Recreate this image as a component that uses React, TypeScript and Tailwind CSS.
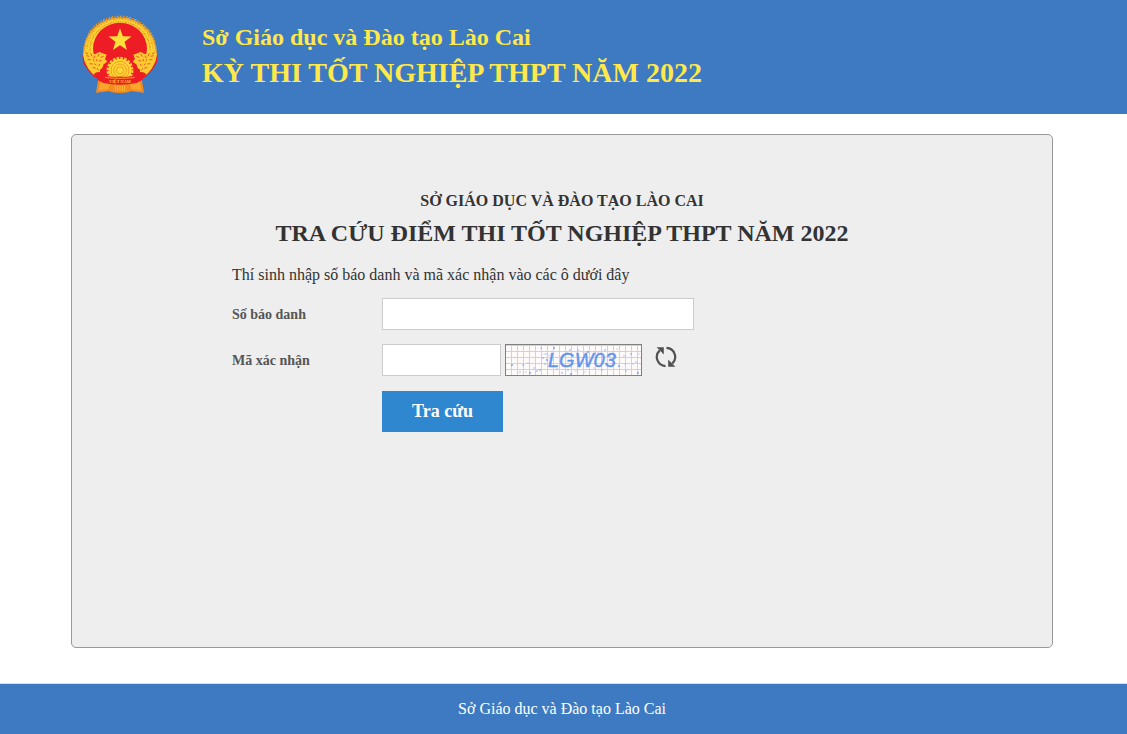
import { useState } from "react";
import type { FormEvent } from "react";

// grains of the rice wreath, laid out ring by ring
const grains = [86, 94, 102].flatMap((radius, ring) =>
  Array.from({ length: 44 }, (_, i) => {
    const angle = ((166 + i * 4.8 + (ring % 2) * 2.4) * Math.PI) / 180;
    return {
      x: 135 + radius * Math.cos(angle) * 1.05,
      y: 127 + radius * Math.sin(angle),
      turn: (angle * 180) / Math.PI + 90 + (ring % 2 ? 35 : -35),
    };
  })
);

const noise = [
  [17, 20], [14, 27], [22, 18], [24, 28], [20, 27], [35, 3], [34, 25], [40, 9],
  [38, 9], [41, 15], [43, 10], [39, 19], [37, 13], [51, 24], [43, 21], [48, 3],
  [46, 14], [28, 23], [56, 28], [62, 25], [65, 22], [65, 29], [70, 26], [72, 5],
  [64, 5], [61, 8], [79, 27], [82, 7], [88, 23], [92, 8], [99, 5], [104, 11],
  [111, 4], [113, 21], [119, 19], [120, 26], [125, 9], [130, 17], [127, 19],
  [132, 28], [133, 9], [118, 11], [31, 26], [96, 25], [108, 18], [6, 20],
];

function Emblem() {
  return (
    <svg viewBox="21 18 228 240" className="h-20 w-[76px] shrink-0" role="img" aria-label="Quốc huy Việt Nam">
      <path d="M26 150A110 108 0 1 1 244 150L205 206H65z" fill="#f7a82c" />
      <path d="M30 150A106 104 0 1 1 240 150L203 204H67z" fill="#fdd835" />
      {grains.map((g, i) => (
        <ellipse
          key={i}
          cx={g.x}
          cy={g.y}
          rx="4"
          ry="1.7"
          fill={i % 3 === 0 ? "#e08a2c" : "#e8a628"}
          transform={`rotate(${g.turn} ${g.x} ${g.y})`}
        />
      ))}
      <ellipse cx="135" cy="122" rx="81" ry="78" fill="#ee1c25" />
      <path d="M75 150h120v54H75z" fill="#ee1c25" />
      <path
        d="M135 61l8.500 24 26 .8-20.800 15.500 7.300 25-21-14.600-21 14.600 7.300-25L100.500 85.800l26-.8z"
        fill="#ffdf3c"
      />
      {/* crossed sheaves, left and right */}
      {[0, 1].map((side) => (
        <g key={side} transform={side ? "matrix(-1 0 0 1 270 0)" : undefined}>
          <path d="M22 141l7-5 10 28 13 22 19 13-1 11-12-3-19-20-14-22z" fill="#ee1c25" />
          <path d="M24 140l5-14 9-5 12 10 9 8 14-7 6 2 16 6-5 13 7 8-11 8-4 11-8 6 1 20-21-7-14-17-11-21z" fill="#fdca30" />
          <path
            d="M31 134l8 4M34 143l9 2M47 136l4 9M60 143l-4 8M73 138l-5 8M86 145l-9 3M38 155l9 0M53 154l6 5M66 153l-2 7M80 157l-9 2M44 167l9 1M58 167l6 4M74 168l-3 6M53 179l9 1M67 181l3 6"
            fill="none"
            stroke="#ea5a2a"
            strokeWidth="3"
          />
        </g>
      ))}
      {/* cogwheel */}
      <circle cx="135" cy="187" r="42" fill="#ee1c25" />
      <circle cx="135" cy="187" r="36" fill="none" stroke="#fdc42f" strokeWidth="9" strokeDasharray="8 3.300" />
      <circle cx="135" cy="187" r="34" fill="#fdd835" />
      {[27, 19, 11].map((r) => (
        <circle key={r} cx="135" cy="187" r={r} fill="none" stroke="#f39a22" strokeWidth="3" />
      ))}
      {/* ribbon */}
      <path d="M70 212l-7 42 41-5 6 4q25 4 50 0l6-4 41 5-7-42q-65 22-130 0z" fill="#f58a20" />
      <path d="M76 220l-5 27 29-4 4-16zM194 220l5 27-29-4-4-16z" fill="#fba52a" />
      <path d="M121 231v18m7-18v18m7-18v18m7-18v18m7-18v18" stroke="#fbc02f" strokeWidth="3" />
      <path
        d="M57 197q8-7 21-4l12 10q45 7 90 0l12-10q13-3 21 4l-11 19-17 9q-50 10-100 0l-17-9z"
        fill="#ee1c25"
      />
      <path d="M91 208q44 6 88 0" fill="none" stroke="#f9a82a" strokeWidth="4" strokeDasharray="4 2" />
      <text x="135" y="225" textAnchor="middle" fontSize="13" fontWeight="700" fill="#fbc92f" fontFamily="Liberation Serif, serif">
        VIỆT NAM
      </text>
    </svg>
  );
}

function Captcha() {
  return (
    <svg viewBox="0 0 135 30" className="h-8 w-[137px] border border-[#808080] bg-[#fffafa]" role="img" aria-label="Mã xác nhận">
      <defs>
        <pattern id="grid" width="6" height="6" patternUnits="userSpaceOnUse" x="0" y="0">
          <path d="M5.500 0v6M0 .5h6" stroke="#d3d3d3" fill="none" />
        </pattern>
      </defs>
      <rect width="135" height="30" fill="url(#grid)" />
      {noise.map(([x, y], i) => (
        <circle key={i} cx={x} cy={y} r={i % 3 ? 0.7 : 1} fill="#6495ed" opacity={i % 2 ? 0.8 : 0.5} />
      ))}
      <text x="42" y="22" fontSize="20" fontStyle="italic" fill="#6495ed" stroke="#6495ed" strokeWidth="0.4" fontFamily="Liberation Sans, Arial, sans-serif">
        LGW03
      </text>
    </svg>
  );
}

function RefreshIcon() {
  return (
    <svg viewBox="0 0 22 22" className="size-[22px]" fill="none" aria-hidden="true">
      <path d="M11.500 1.900A9.100 9.100 0 0 1 17.300 17.600M10.500 20.100A9.100 9.100 0 0 1 4.700 4.400" stroke="#505050" strokeWidth="2.200" />
      <path d="M1.500 1.200h7.300v7.200L6.400 6 4 3.600z" fill="#505050" />
      <path d="M20.500 20.800h-7.300v-7.200l2.400 2.400 2.400 2.400z" fill="#505050" />
    </svg>
  );
}

export default function App() {
  const [candidate, setCandidate] = useState("");
  const [code, setCode] = useState("");

  const handleSubmit = (e: FormEvent) => {
    e.preventDefault();
  };

  return (
    <div className="flex min-h-screen flex-col bg-white font-['Liberation_Serif','Times_New_Roman',serif] text-[#333]">

      {/* HEADER */}
      <header className="bg-[#3e7ac2] pr-[3px]">
        <div className="mx-auto flex min-h-[114px] max-w-[982px] items-start gap-11 pt-3.5 pl-[11px] font-bold text-[#ffe84a]">
          <Emblem />
          <div className="pt-[7px]">
            <p className="text-[24px] leading-8">Sở Giáo dục và Đào tạo Lào Cai</p>
            <h1 className="text-[28px] leading-10">KỲ THI TỐT NGHIỆP THPT NĂM 2022</h1>
          </div>
        </div>
      </header>

      {/* SEARCH PANEL */}
      <main className="flex flex-1 flex-col pt-5 pr-[3px] pb-[35px]">
        <section className="mx-auto min-h-[514px] w-full max-w-[982px] flex-1 rounded-[5px] border border-[#999] bg-[#eee] pt-[54px]">

          <div className="text-center font-bold">
            <p className="text-[16px] leading-6">SỞ GIÁO DỤC VÀ ĐÀO TẠO LÀO CAI</p>
            <h2 className="text-[24px] leading-10">TRA CỨU ĐIỂM THI TỐT NGHIỆP THPT NĂM 2022</h2>
          </div>

          <form onSubmit={handleSubmit} className="px-40 pt-2.5">
            <p className="text-[16px] leading-6">
              Thí sinh nhập số báo danh và mã xác nhận vào các ô dưới đây
            </p>

            <div className="mt-[11px] grid grid-cols-[150px_1fr] items-center gap-y-3.5 text-[14px]">
              <label htmlFor="candidate" className="font-bold text-[#555]">Số báo danh</label>
              <input
                id="candidate"
                value={candidate}
                onChange={(e) => setCandidate(e.target.value)}
                className="h-8 w-full max-w-[312px] border border-[#ccc] bg-white px-2 outline-none"
              />

              <label htmlFor="code" className="font-bold text-[#555]">Mã xác nhận</label>
              <div className="flex h-[33px] items-start gap-1">
                <input
                  id="code"
                  value={code}
                  onChange={(e) => setCode(e.target.value)}
                  className="h-8 w-[119px] border border-[#ccc] bg-white px-2 outline-none"
                />
                <Captcha />
                <button type="button" aria-label="Đổi mã xác nhận" className="ml-2 flex h-[26px] cursor-pointer items-center px-px">
                  <RefreshIcon />
                </button>
              </div>

              <button
                type="submit"
                className="col-start-2 h-[41px] w-[121px] cursor-pointer bg-[#2f87d0] text-[18px] font-bold text-white"
              >
                Tra cứu
              </button>
            </div>
          </form>

        </section>
      </main>

      {/* FOOTER */}
      <footer className="border-t border-[#ddd] bg-[#3e7ac2] py-3 pr-[3px] text-center text-[16px] leading-[26px] text-white">
        Sở Giáo dục và Đào tạo Lào Cai
      </footer>

    </div>
  );
}
